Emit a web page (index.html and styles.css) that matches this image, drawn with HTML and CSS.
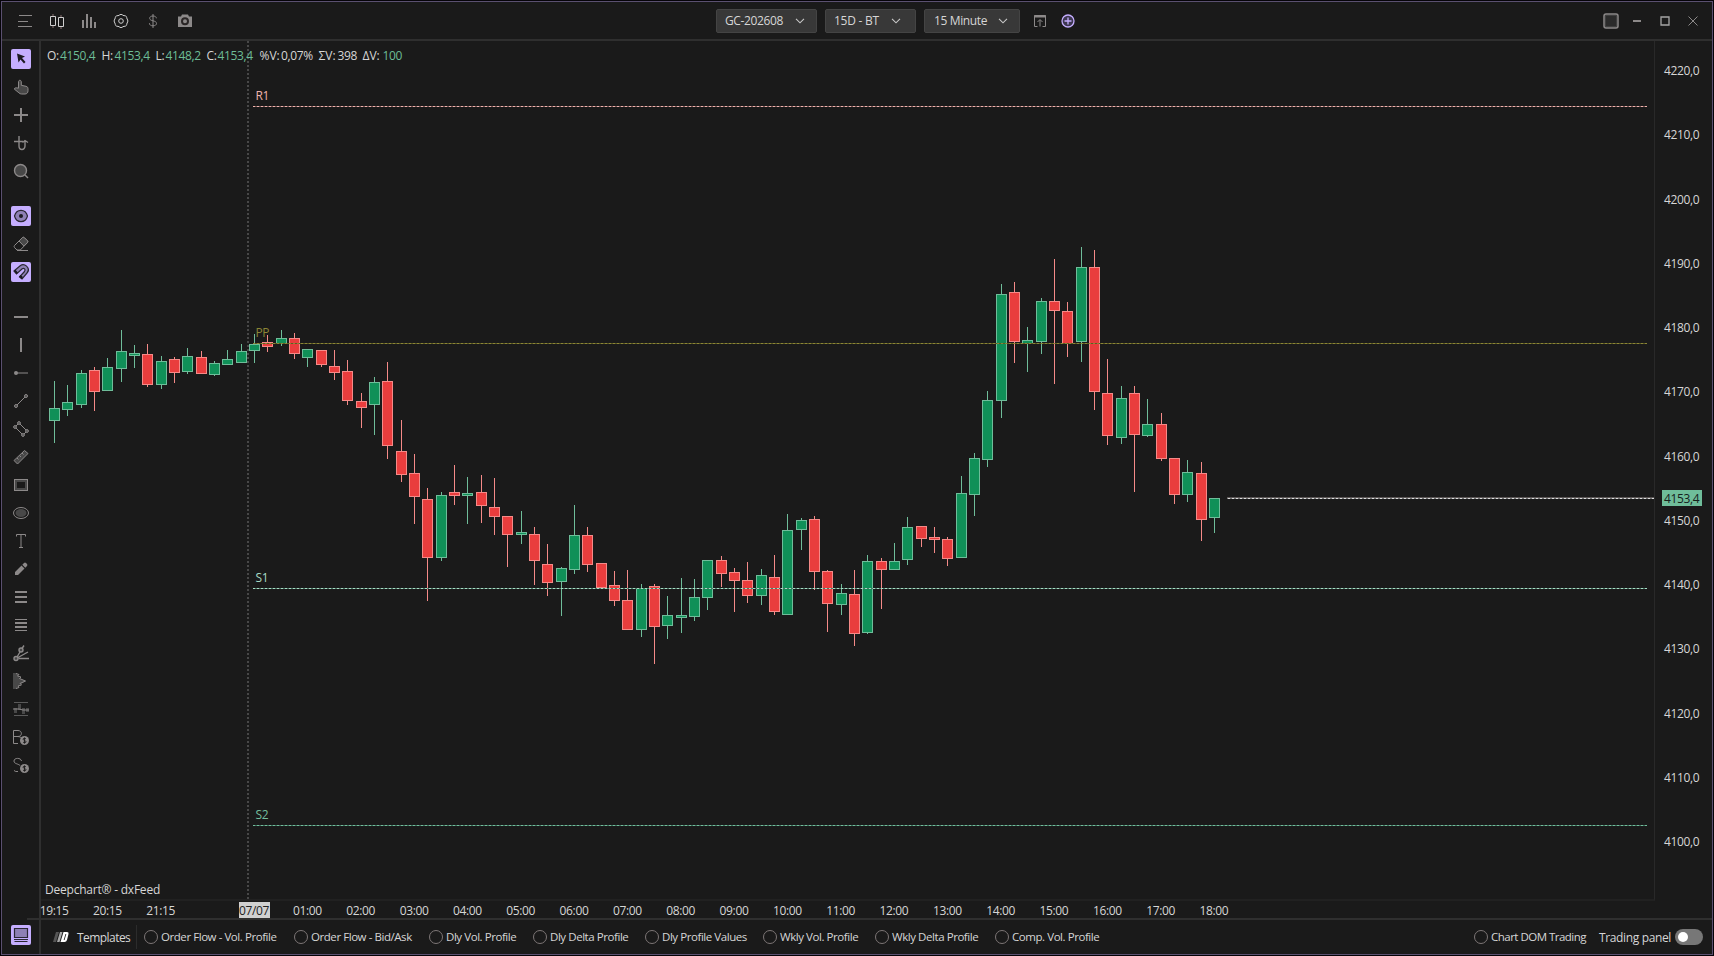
FILE: index.html
```html
<!DOCTYPE html>
<html lang="en">
  <head>
    <meta charset="UTF-8" />
    <meta name="viewport" content="width=device-width, initial-scale=1.0" />
    <title>Deepchart</title>
    <link rel="stylesheet" href="styles.css">
  </head>
  <body>
    <div class="window">
      <header class="topbar">
        <div class="tools">
          <svg class="icon" viewBox="0 0 20 20"><path d="M4 4.5h13M3 10.5h10M3 15.5h14" /></svg>
          <svg class="icon light" viewBox="0 0 20 20"><path d="M3.5 5.5h5v9h-5zM11.5 6.5h5v9h-5z" /><path class="dim" d="M6 3v2M6 15v2M14 4v2M14 16v2" /></svg>
          <svg class="icon thick" viewBox="0 0 20 20"><path d="M4 9v8M8 3v14M12 6v11M16 11v6" /></svg>
          <svg class="icon light" viewBox="0 0 20 20"><circle cx="10" cy="10" r="2.3" /><path d="M10 3.4c1 0 1.500.5 2 1l2.500.5c1 .4 1.300 1 1.200 2l.9 2.100c.4.7.4 1.400 0 2l-.9 2.100c.1 1-.2 1.600-1.200 2l-2.500.5c-1 1.300-3 1.300-4 0l-2.500-.5c-1-.4-1.300-1-1.200-2l-.9-2.100c-.4-.7-.4-1.400 0-2l.9-2.100c-.1-1 .2-1.600 1.200-2l2.500-.5c.5-.5 1-1 2-1z" /></svg>
          <svg class="icon" viewBox="0 0 20 20"><path d="M13.300 7.300c0-1.500-1.300-2.300-3.300-2.300s-3.300.8-3.300 2.300c0 3.300 6.800 1.800 6.800 5.100 0 1.500-1.400 2.400-3.500 2.400s-3.600-.8-3.600-2.600M10 3v14" /></svg>
          <svg class="icon" viewBox="0 0 20 20"><path class="solid" d="M7 3.500h6L14 5.500h3V16H3V5.500h3z" /><circle class="hole" cx="10" cy="10.300" r="3" /></svg>
        </div>
        <div class="selects">
          <button class="select symbol">GC-202608<svg class="caret" viewBox="0 0 10 6"><path d="M1 .8l4 4 4-4" /></svg></button>
          <button class="select range">15D - BT<svg class="caret" viewBox="0 0 10 6"><path d="M1 .8l4 4 4-4" /></svg></button>
          <button class="select period">15 Minute<svg class="caret" viewBox="0 0 10 6"><path d="M1 .8l4 4 4-4" /></svg></button>
          <svg class="icon popout" viewBox="0 0 20 20"><path d="M7.500 15.500h-3v-11h11v11h-3M10 15.500V9M7.500 11L10 8.500l2.500 2.500" /><path class="thickline" d="M4 5.500h12" /></svg>
          <svg class="icon add" viewBox="0 0 20 20"><circle cx="10" cy="10" r="6" /><path d="M10 6.500v7M6.500 10h7" /></svg>
        </div>
        <div class="winbuttons">
          <svg class="icon full" viewBox="0 0 20 20"><rect x="3" y="3" width="14" height="14" rx="2" fill="#2b2b2b" /><rect class="dots" x="4.500" y="4.500" width="11" height="11" /></svg>
          <svg class="icon" viewBox="0 0 20 20"><path class="thickline" d="M6 10h8" /></svg>
          <svg class="icon" viewBox="0 0 20 20"><path class="box" d="M6 6h8v8H6z" /></svg>
          <svg class="icon" viewBox="0 0 20 20"><path d="M5.500 5.500l9 9M14.500 5.500l-9 9" /></svg>
        </div>
      </header>

      <div class="content">
        <aside class="sidebar">
          <div class="group">
            <svg class="icon active" viewBox="0 0 20 20"><path class="ink" d="M6 4.500l8 3-3 1.500 3.500 4-1.500 1.500-3.500-4-2 3z" /></svg>
            <svg class="icon" viewBox="0 0 20 20"><path class="soft" d="M7.500 10V4.800c0-2 2.800-2 2.800 0v3.500l4.700 1c1.500.4 2 1.200 2 2.500v2c0 2-1.200 3.200-3 3.200h-3.500c-1 0-1.800-.4-2.600-1.200L3.200 12c.6-1.200 1.700-1.500 4.300-.8z" /></svg>
            <svg class="icon thick" viewBox="0 0 20 20"><path d="M3 10h14M10 3v14" /></svg>
            <svg class="icon mid" viewBox="0 0 20 20"><path d="M8 3v10a3 3.500 0 0 0 6 0V8M11.500 9.500L14 7.500l3 2M3 8.500h9" /></svg>
            <svg class="icon mid" viewBox="0 0 20 20"><circle class="soft" cx="9.500" cy="9.500" r="6" /><path d="M14 14l3 3" /></svg>
          </div>
          <div class="group">
            <svg class="icon active" viewBox="0 0 20 20"><path class="shade" d="M3.500 10C5.500 2.500 14.500 2.500 16.500 10 14.500 17.500 5.500 17.500 3.500 10z" /><circle class="ink" cx="10" cy="10" r="2" /></svg>
            <svg class="icon" viewBox="0 0 20 20"><path d="M3.500 11.500l8-8q1-.6 2 .3l3 3q.8 1-.2 2l-7 7.200H6l-2.500-2.500q-.8-1 0-2z" /><path class="soft" d="M8 7l3.500-3.500q1-.6 2 .3l3 3q.8 1-.2 2L12.800 12z" /><path d="M6 16.500h11" /></svg>
            <svg class="icon active" viewBox="0 0 20 20"><path class="shade" d="M3 9L9.500 3.500c3-2.200 6 0 7.500 2.500 1 2 .5 3.500-1 5l-5 6-2.500-2 5-5.500c1.500-2-.5-4-2.300-2.700L5.500 12z" /><path class="ink" d="M3 9l1.500-1.300 2.500 3-1.500 1.400zM8 14.500l1.500-1.500 2.500 2-1.500 2z" /></svg>
          </div>
          <div class="group">
            <svg class="icon thick" viewBox="0 0 20 20"><path d="M3 10h14" /></svg>
            <svg class="icon thick" viewBox="0 0 20 20"><path d="M10 3v14" /></svg>
            <svg class="icon" viewBox="0 0 20 20"><path d="M6 10h11" /><circle class="solid" cx="5" cy="10" r="2" /></svg>
            <svg class="icon" viewBox="0 0 20 20"><path d="M6 14l8-8" /><circle class="soft" cx="5" cy="15" r="1.500" /><circle class="soft" cx="15" cy="5" r="1.500" /></svg>
            <svg class="icon" viewBox="0 0 20 20"><path d="M9 5l6 6M5 9l6 6" /><circle class="soft" cx="8" cy="4" r="1.400" /><circle class="soft" cx="4" cy="8" r="1.400" /><circle class="soft" cx="16" cy="12" r="1.400" /><circle class="soft" cx="12" cy="16" r="1.400" /><path d="M5 7l2-2M13 15l2-2" /></svg>
            <svg class="icon" viewBox="0 0 20 20"><path class="soft" d="M3 13.500L13.500 3.500l3.500 3L6.500 17z" /><path d="M6 11l1.500 1.500M8.500 8.500L10 10M11 6l1.500 1.500" /></svg>
            <svg class="icon" viewBox="0 0 20 20"><rect x="3.500" y="4.500" width="13" height="11" /><rect class="inner" x="5" y="6" width="10" height="8" /></svg>
            <svg class="icon" viewBox="0 0 20 20"><ellipse cx="10" cy="10" rx="7.500" ry="5.500" /><ellipse class="fillsoft" cx="10" cy="10" rx="5.500" ry="4" /></svg>
            <svg class="icon" viewBox="0 0 20 20"><path d="M5.500 5.500v-2h9v2M10 3.500v13M8 16.500h4" /></svg>
            <svg class="icon" viewBox="0 0 20 20"><path class="solid" d="M4 16v-3l6.500-6.500 3 3L7 16zM11.300 5.700L13 4q1-.8 2 0l1 1q.8 1 0 2l-1.700 1.700z" /></svg>
            <svg class="icon thick" viewBox="0 0 20 20"><path d="M4 5h12M4 10h12M4 15h12" /></svg>
            <svg class="icon" viewBox="0 0 20 20"><path d="M4 4.500h12M4 15.500h12" /><path class="thickline" d="M4 8h12M4 12h12" /></svg>
            <svg class="icon mid" viewBox="0 0 20 20"><circle class="soft" cx="5" cy="15.500" r="2" /><circle class="soft" cx="10" cy="7" r="2" /><path d="M6 14l3-5M11 5.500L13 2.500M7 14.500l10-5.500M7.500 15.500H18" /></svg>
            <svg class="icon" viewBox="0 0 20 20"><path class="fillsoft" d="M2 2h4l1 3 3 3 5 2-5 3-3 2-1 3H2z" /><path d="M5 2.500l3 1-1.500 1.500 3.500 1-1.500 1.500L14.500 10 9 12.500l1.500 1.500L7 15l1 1.500-3 1" /></svg>
            <svg class="icon faint" viewBox="0 0 20 20"><path d="M3 3.500h14M3 16.500h14" /><path class="fillsoft" d="M3 9h3v5H3zM7 5h3v6H7zM11 9h3v6h-3zM15 9h3v4h-3z" /><path class="bright" d="M2 10h6l4 1h6" /></svg>
            <svg class="icon" viewBox="0 0 20 20"><path d="M7 16.500H2.500v-13h4.500c4.500 0 4.500 6 0 6H2.500M7 9.500q3 0 4 2" /><circle class="solid" cx="13.500" cy="13.500" r="4.500" /><path class="cut" d="M15 12c-1-1.300-3-.8-3 .2s3 1.300 3 2.500-2 1.500-3 .3M13.500 10.500v6" /></svg>
            <svg class="icon" viewBox="0 0 20 20"><path d="M10.500 6c-.5-3.500-7.500-3.500-7.500 0 0 3 4 2.500 6 4.500M3 15.500q1.500 1.500 4 1" /><circle class="solid" cx="13.500" cy="13.500" r="4.500" /><path class="cut" d="M15 12c-1-1.300-3-.8-3 .2s3 1.300 3 2.500-2 1.500-3 .3M13.500 10.500v6" /></svg>
          </div>
          <svg class="icon active bottom" viewBox="0 0 20 20"><path class="shade" d="M3.500 3.500h13v9h-13z" /><path class="darkline" d="M3 14.500h14M3.500 16.500h13" /></svg>
        </aside>

        <main class="main">
          <div class="chart">
            <div class="plot">
              <svg class="canvas" id="canvas" width="1613" height="858" viewBox="41 41 1613 858"></svg>
              <div class="ohlc">
                <span>O:</span><b>4150,4</b>
                <span>H:</span><b>4153,4</b>
                <span>L:</span><b>4148,2</b>
                <span>C:</span><b>4153,4</b>
                <span class="wide">%V:</span><span>0,07%</span>
                <span class="wide">ΣV:</span><span>398</span>
                <span class="wide">ΔV:</span><b>100</b>
              </div>
              <div class="credit">Deepchart® - dxFeed</div>
            </div>
            <div class="prices">
              <span>4220,0</span><span>4210,0</span><span>4200,0</span><span>4190,0</span><span>4180,0</span><span>4170,0</span><span>4160,0</span><span>4150,0</span><span>4140,0</span><span>4130,0</span><span>4120,0</span><span>4110,0</span><span>4100,0</span>
              <div class="last">4153,4</div>
            </div>
          </div>
          <div class="times">
            <span>19:15</span><span>20:15</span><span>21:15</span><span class="day"><i>07/07</i></span><span>01:00</span><span>02:00</span><span>03:00</span><span>04:00</span><span>05:00</span><span>06:00</span><span>07:00</span><span>08:00</span><span>09:00</span><span>10:00</span><span>11:00</span><span>12:00</span><span>13:00</span><span>14:00</span><span>15:00</span><span>16:00</span><span>17:00</span><span>18:00</span>
          </div>
          <footer class="footer">
            <div class="templates">
              <svg class="logo" viewBox="0 0 16 12"><path fill="#555" d="M3 1h3L3 11H0z" /><path fill="#aaa" d="M7 1h2.500L6.500 11H4z" /><path fill="#fff" d="M10.500 1H14q2 0 1.500 2l-1.500 6q-.6 2-2.500 2H7.500z" /><path fill="#1a1a1a" d="M12.500 3h.8L11.500 9h-.8z" /></svg>
              Templates
            </div>
            <div class="options">
              <label>Order Flow - Vol. Profile</label>
              <label>Order Flow - Bid/Ask</label>
              <label>Dly Vol. Profile</label>
              <label>Dly Delta Profile</label>
              <label>Dly Profile Values</label>
              <label>Wkly Vol. Profile</label>
              <label>Wkly Delta Profile</label>
              <label>Comp. Vol. Profile</label>
            </div>
            <div class="trading">
              <label class="dom">Chart DOM Trading</label>
              <span class="panel">Trading panel</span>
              <span class="toggle"></span>
            </div>
          </footer>
        </main>
      </div>
    </div>

    <script src="chart.js"></script>
  </body>
</html>
```

FILE: styles.css
```css
* {
  box-sizing: border-box;
}

body {
  margin: 0;
  padding: 1px;
  width: 1714px;
  height: 956px;
  overflow: hidden;
  background: #050308;
  color: #d6d6d6;
  font-family: "Open Sans", "Noto Sans", sans-serif;
  font-size: 12px;
  letter-spacing: -0.36px;
}

.window {
  display: flex;
  flex-direction: column;
  width: 1712px;
  height: 954px;
  border: 1px solid #5a5070;
  background: #1a1a1a;
}

/* icons */
.icon {
  width: 20px;
  height: 20px;
  flex: none;
  fill: none;
  stroke: #8c8989;
  stroke-width: 1;
}

.icon.light {
  stroke: #d0d0d0;
}

.icon.mid {
  stroke-width: 1.4;
}

.icon.thick,
.thickline {
  stroke-width: 2;
}

.icon .dim {
  stroke: #8a7474;
}

.icon .solid {
  fill: #8c8989;
  stroke: none;
}

.icon .soft {
  fill: #484848;
}

.icon .fillsoft {
  fill: #484848;
  stroke: none;
}

.icon .hole {
  fill: #8c8989;
  stroke: #2a2626;
  stroke-width: 2;
}

.icon .inner {
  stroke: #484848;
  stroke-width: 2;
}

.icon .box {
  stroke: #a5a5a5;
  stroke-width: 1.3;
}

.icon.full {
  stroke-width: 1.5;
  transform: translateX(2px);
}

.icon .dots {
  stroke: #555;
  stroke-width: 1;
  stroke-dasharray: 1 1;
}

.icon .cut {
  stroke: #1a1a1a;
  stroke-width: 0.9;
}

.icon.faint {
  stroke: #5a5a5a;
}

.icon.faint .bright {
  stroke: #8c8989;
}

.icon.active {
  background: #c5aeff;
  border-radius: 2px;
  stroke: #2a2733;
}

.icon.active .ink {
  fill: #1c1a22;
  stroke: none;
}

.icon.active .shade {
  fill: #8e80b5;
  stroke-width: 1.2;
}

.icon.add {
  stroke: #c5aeff;
  fill: #3d3750;
  stroke-width: 1.3;
}

/* top bar */
.topbar {
  display: grid;
  grid-template-columns: 714px 1fr auto;
  align-items: center;
  height: 39px;
  border-bottom: 2px solid #2f2f2f;
}

.tools {
  display: flex;
  gap: 12px;
  padding-left: 13px;
}

.selects {
  display: flex;
  align-items: center;
  gap: 8px;
}

.select {
  display: flex;
  align-items: center;
  justify-content: space-between;
  height: 24px;
  padding: 0 11px 0 8px;
  border: 1px solid #444;
  border-radius: 2px;
  background: #383838;
  color: #d6d6d6;
  font: inherit;
  letter-spacing: -0.36px;
}

.symbol {
  width: 101px;
}

.range {
  width: 91px;
  padding-right: 14px;
  letter-spacing: -0.25px;
}

.period {
  width: 96px;
  padding-left: 9px;
}

.caret {
  width: 10px;
  height: 6px;
  fill: none;
  stroke: #c8c8c8;
  stroke-width: 1.1;
}

.popout {
  margin-left: 2px;
}

.winbuttons {
  display: flex;
  gap: 8px;
  padding-right: 9px;
}

.content {
  display: flex;
  flex: 1;
  min-height: 0;
}

/* drawing tools */
.sidebar {
  display: flex;
  flex-direction: column;
  width: 39px;
  padding: 8px 0 9px 9px;
  border-right: 2px solid #2f2f2f;
}

.group {
  display: flex;
  flex-direction: column;
  gap: 8px;
  margin-bottom: 25px;
}

.bottom {
  margin-top: auto;
}

.main {
  display: flex;
  flex-direction: column;
  flex: 1;
}

/* chart */
.chart {
  display: flex;
  height: 860px;
}

.plot {
  position: relative;
  width: 1614px;
  border-right: 1px solid #292929;
  border-bottom: 2px solid #212121;
}

.canvas {
  display: block;
}

.ohlc {
  position: absolute;
  top: 6px;
  left: 6px;
  display: grid;
  grid-template-columns: 13px 41.5px 13px 41px 10px 41px 11px 42px 21.5px 37.5px 19px 25px 20px 20px;
  line-height: 17px;
  white-space: nowrap;
}

.ohlc b {
  font-weight: 400;
  color: #6dbd97;
}

.wide {
  letter-spacing: 0;
}

.credit {
  position: absolute;
  left: 4px;
  bottom: 1px;
  line-height: 17px;
  letter-spacing: -0.22px;
}

.prices {
  position: relative;
  display: flex;
  flex-direction: column;
  padding: 21px 0 0 9px;
}

.prices span {
  flex: none;
  height: 64.27px;
  line-height: 17px;
}

.last {
  position: absolute;
  top: 449px;
  left: 7px;
  width: 40px;
  height: 16px;
  padding-left: 2px;
  background: #6fbd9a;
  color: #16211c;
  line-height: 17px;
}

.canvas text {
  font-size: 12px;
}

.times {
  display: flex;
  height: 19px;
  margin-left: -13.600px;
  padding-top: 1px;
  border-bottom: 2px solid #2f2f2f;
  line-height: 18px;
}

.times span {
  flex: none;
  width: 53.333px;
  text-align: center;
}

.times .day {
  margin-left: 40px;
}

.times i {
  display: block;
  width: 31px;
  height: 16px;
  margin: 0 auto;
  background: #d0d0d0;
  color: #222;
  font-style: normal;
}

/* footer */
.footer {
  display: flex;
  align-items: center;
  flex: 1;
}

.templates {
  display: flex;
  align-items: center;
  width: 96px;
  height: 24px;
  padding-left: 12px;
  border-right: 1px solid #2c2c2c;
  letter-spacing: -0.55px;
}

.logo {
  width: 16px;
  height: 12px;
  margin-right: 8px;
}

.options {
  display: grid;
  grid-template-columns: 150px 135px 104px 112px 118px 112px 120px 110px;
  padding-left: 6.500px;
}

.footer label {
  display: flex;
  align-items: center;
  height: 16px;
  margin-bottom: 1px;
  font-size: 11.500px;
  letter-spacing: -0.44px;
  white-space: nowrap;
}

.footer label::before {
  content: "";
  width: 12px;
  height: 12px;
  margin-right: 3.500px;
  border: 1px solid #7d7676;
  border-radius: 50%;
}

.trading {
  display: flex;
  align-items: center;
  margin-left: auto;
  padding-right: 9px;
}

.footer .dom {
  letter-spacing: -0.52px;
}

.panel {
  margin-left: 13px;
  letter-spacing: -0.36px;
}

.toggle {
  width: 28px;
  height: 16px;
  margin-left: 4px;
  padding: 3px;
  border-radius: 8px;
  background: #777;
}

.toggle::before {
  content: "";
  display: block;
  width: 10px;
  height: 10px;
  border-radius: 50%;
  background: #fff;
}
```

FILE: chart.js
```js
// direction, high, body top, body bottom, low
const candles = [
  ["u", 381, 408, 421, 443], ["u", 385, 402, 410, 416], ["u", 370, 373, 405, 408], ["d", 367, 370, 392, 411],
  ["u", 358, 367, 391, 391], ["u", 330, 351, 369, 382], ["u", 345, 353, 356, 368], ["d", 344, 354, 385, 387],
  ["u", 356, 361, 385, 389], ["d", 357, 359, 373, 383], ["u", 348, 356, 372, 374], ["d", 351, 357, 374, 374],
  ["u", 361, 363, 375, 376], ["u", 350, 359, 365, 365], ["u", 344, 351, 363, 363], ["u", 334, 344, 351, 363],
  ["d", 335, 342, 347, 352], ["u", 330, 338, 344, 346], ["d", 333, 338, 354, 359], ["u", 349, 349, 358, 367],
  ["d", 350, 350, 365, 367], ["d", 350, 366, 373, 380], ["d", 360, 371, 401, 405], ["d", 393, 401, 408, 428],
  ["u", 377, 382, 405, 435], ["d", 362, 381, 446, 459], ["d", 420, 451, 475, 482], ["d", 454, 473, 497, 524],
  ["d", 488, 499, 558, 601], ["u", 492, 495, 558, 561], ["d", 465, 492, 496, 505], ["u", 477, 493, 496, 524],
  ["d", 475, 492, 506, 523], ["d", 478, 507, 517, 535], ["d", 516, 516, 535, 567], ["u", 511, 532, 535, 544],
  ["d", 527, 534, 561, 585], ["d", 544, 564, 583, 596], ["u", 567, 568, 582, 616], ["u", 505, 535, 570, 574],
  ["d", 527, 535, 565, 572], ["d", 563, 563, 588, 588], ["d", 571, 585, 601, 606], ["d", 570, 600, 630, 630],
  ["u", 584, 588, 630, 637], ["d", 584, 586, 627, 664], ["u", 596, 615, 626, 639], ["u", 578, 615, 618, 633],
  ["u", 579, 597, 617, 621], ["u", 560, 560, 598, 610], ["d", 556, 560, 574, 587], ["d", 568, 572, 581, 612],
  ["d", 562, 580, 596, 603], ["u", 569, 575, 596, 605], ["d", 555, 577, 612, 615], ["u", 514, 530, 615, 615],
  ["u", 518, 520, 530, 550], ["d", 516, 519, 572, 590], ["d", 570, 571, 604, 632], ["u", 584, 593, 605, 615],
  ["d", 570, 594, 634, 646], ["u", 555, 561, 633, 634], ["d", 558, 561, 570, 609], ["u", 543, 561, 570, 570],
  ["u", 517, 527, 560, 565], ["d", 526, 526, 539, 547], ["d", 527, 537, 540, 553], ["d", 537, 539, 559, 566],
  ["u", 476, 493, 558, 558], ["u", 453, 458, 495, 516], ["u", 391, 400, 460, 467], ["u", 284, 294, 401, 418],
  ["d", 282, 292, 342, 363], ["u", 327, 340, 344, 372], ["u", 298, 301, 342, 354], ["d", 259, 301, 311, 384],
  ["d", 302, 311, 344, 357], ["u", 247, 267, 342, 362], ["d", 250, 267, 392, 410], ["d", 359, 393, 436, 445],
  ["u", 386, 398, 438, 444], ["d", 386, 393, 435, 492], ["u", 399, 424, 436, 437], ["d", 413, 424, 459, 461],
  ["d", 458, 458, 495, 504], ["u", 460, 472, 495, 502], ["d", 462, 473, 520, 541], ["u", 498, 498, 518, 533],
];

const levels = [
  { name: "R1", y: 106, color: "#f0b4ae", dim: "#7d5a58" },
  { name: "PP", y: 343, color: "#8c8636", dim: "#5c5a24" },
  { name: "S1", y: 588, color: "#a9dcc6", dim: "#4f7a68" },
  { name: "S2", y: 825, color: "#74bd9c", dim: "#3f7460" },
];

const fills = { u: "#109058", d: "#e93d3d" };
const strokes = { u: "#6fbd9a", d: "#f58a88" };

const canvas = document.getElementById("canvas");

function draw(tag, attrs, text) {
  const el = document.createElementNS("http://www.w3.org/2000/svg", tag);
  for (const key in attrs) {
    el.setAttribute(key, attrs[key]);
  }
  if (text) {
    el.textContent = text;
  }
  canvas.appendChild(el);
}

// session separator
draw("path", { d: "M248 41V899", stroke: "#484848", "stroke-width": 2, "stroke-dasharray": "2 2" });

candles.forEach(([dir, high, top, bottom, low], i) => {
  const x = Math.round(54 + (i * 40) / 3) + 0.5;
  draw("path", { d: `M${x} ${high}V${low}`, stroke: strokes[dir] });
  draw("rect", {
    x: x - 5,
    y: top + 0.5,
    width: 10,
    height: bottom - top - 1,
    fill: fills[dir],
    stroke: strokes[dir],
  });
});

levels.forEach(({ name, y, color, dim }) => {
  const d = `M253 ${y + 0.5}H1647`;
  draw("path", { d, stroke: dim });
  draw("path", { d, stroke: color, "stroke-dasharray": "2 2" });
  draw("text", { x: 255.5, y: y - 6, fill: color }, name);
});

// last price
draw("path", { d: "M1227 497.5H1654", stroke: "#5a5555" });
draw("path", { d: "M1227 498.5H1654", stroke: "#777" });
draw("path", { d: "M1228 498.5H1654", stroke: "#ddd", "stroke-dasharray": "2 2" });
```
